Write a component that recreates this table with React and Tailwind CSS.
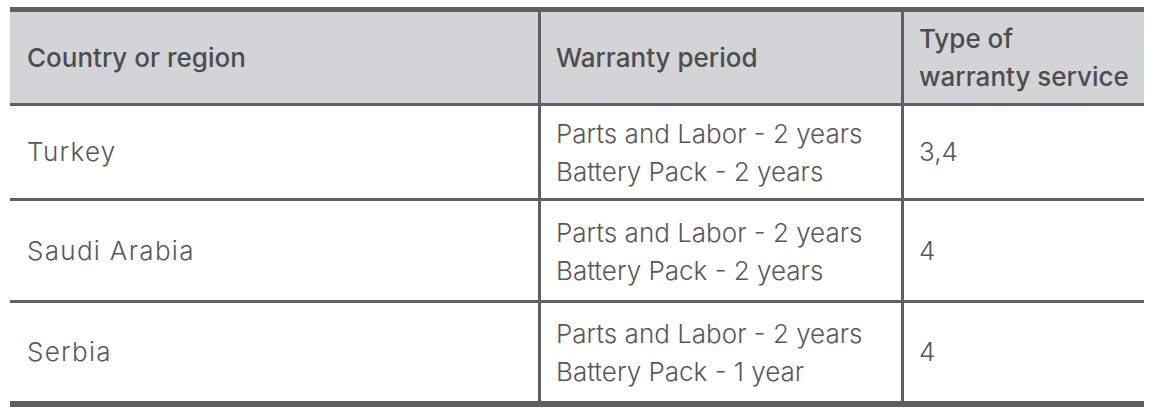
export default function App() {
  const rows = [
    { c: "Turkey", p: ["Parts and Labor - 2 years", "Battery Pack - 2 years"], t: "3,4", h: "h-[95px]", b: "border-b-[3px]" },
    { c: "Saudi Arabia", p: ["Parts and Labor - 2 years", "Battery Pack - 2 years"], t: "4", h: "h-[102px]", b: "border-b-[3px]" },
    { c: "Serbia", p: ["Parts and Labor - 2 years", "Battery Pack - 1 year"], t: "4", h: "h-[104px]", b: "border-b-[6px]" },
  ];
  return (
    <div className="w-[1160px] h-[420px] bg-white pt-[7px] pl-[10px]" style={{ fontFamily: "Inter, 'Liberation Sans', sans-serif" }}>
      <div className="w-[1134px] border-t-[5px] border-[#5f5f5f]">
        <div className="flex h-[94px] bg-[#d3d4d6] border-b-[3px] border-[#5f5f5f] text-[#4d4d4f] text-[26px] font-medium leading-[38px]">
          <div className="w-[528px] pl-[17px] flex items-center">Country or region</div>
          <div className="w-[363px] border-l-[3px] border-[#5f5f5f] pl-[15px] flex items-center">Warranty period</div>
          <div className="flex-1 border-l-[3px] border-[#5f5f5f] pl-[15px] flex items-center"><div>Type of<br />warranty service</div></div>
        </div>
        {rows.map((r) => (
          <div key={r.c} className={`flex ${r.h} ${r.b} border-[#5f5f5f] text-[#58585a] text-[26px] font-light leading-[38px]`}>
            <div className="w-[528px] pl-[17px] flex items-center tracking-[1.3px]">{r.c}</div>
            <div className="w-[363px] border-l-[3px] border-[#5f5f5f] pl-[15px] flex items-center pt-[2px]"><div>{r.p[0]}<br />{r.p[1]}</div></div>
            <div className="flex-1 border-l-[3px] border-[#5f5f5f] pl-[15px] flex items-center">{r.t}</div>
          </div>
        ))}
      </div>
    </div>
  );
}
